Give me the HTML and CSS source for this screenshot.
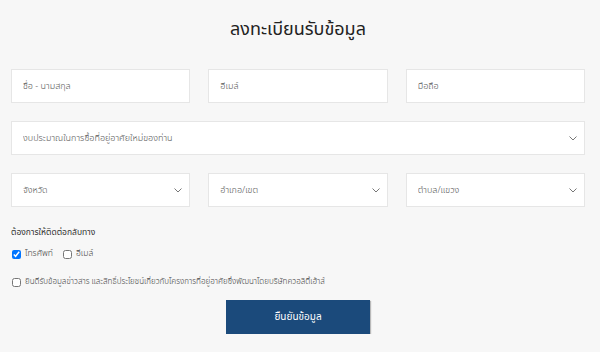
FILE: index.html
```html
<!DOCTYPE html>
<html lang="th">
<head>
    <meta charset="UTF-8">
    <title>ลงทะเบียนรับข้อมูล</title>
    <link rel="stylesheet" href="styles.css">
</head>
<body>
    <div id="container">
        <h1 class="title">ลงทะเบียนรับข้อมูล</h1>
        <form class="reg-form">
            <div class="row row-3">
                <input type="text" class="field" placeholder="ชื่อ - นามสกุล">
                <input type="text" class="field" placeholder="อีเมล์">
                <input type="text" class="field" placeholder="มือถือ">
            </div>
            <div class="row">
                <div class="select-wrap">
                    <select class="field">
                        <option>งบประมาณในการซื้อที่อยู่อาศัยใหม่ของท่าน</option>
                    </select>
                    <svg class="chevron" width="8" height="5" viewBox="0 0 8 5"><path d="M0.5 0.5 L4 4 L7.5 0.5" fill="none" stroke="#777" stroke-width="1"/></svg>
                </div>
            </div>
            <div class="row row-3">
                <div class="select-wrap">
                    <select class="field"><option>จังหวัด</option></select>
                    <svg class="chevron" width="8" height="5" viewBox="0 0 8 5"><path d="M0.5 0.5 L4 4 L7.5 0.5" fill="none" stroke="#777" stroke-width="1"/></svg>
                </div>
                <div class="select-wrap">
                    <select class="field"><option>อำเภอ/เขต</option></select>
                    <svg class="chevron" width="8" height="5" viewBox="0 0 8 5"><path d="M0.5 0.5 L4 4 L7.5 0.5" fill="none" stroke="#777" stroke-width="1"/></svg>
                </div>
                <div class="select-wrap">
                    <select class="field"><option>ตำบล/แขวง</option></select>
                    <svg class="chevron" width="8" height="5" viewBox="0 0 8 5"><path d="M0.5 0.5 L4 4 L7.5 0.5" fill="none" stroke="#777" stroke-width="1"/></svg>
                </div>
            </div>

            <div class="contact">
                <p class="contact-label">ต้องการให้ติดต่อกลับทาง</p>
                <div class="checks">
                    <label class="check"><input type="checkbox" checked> โทรศัพท์</label>
                    <label class="check"><input type="checkbox"> อีเมล์</label>
                </div>
                <label class="check consent"><input type="checkbox"> ยินดีรับข้อมูลข่าวสาร และสิทธิ์ประโยชน์เกี่ยวกับโครงการที่อยู่อาศัยซึ่งพัฒนาโดยบริษัทควอลิตี้เฮ้าส์</label>
            </div>

            <div class="submit-row">
                <button type="button" class="btn-submit">ยืนยันข้อมูล</button>
            </div>
        </form>
    </div>
</body>
</html>
```

FILE: styles.css
```css
body {
    font-family: 'Noto Sans Thai', 'Noto Sans', sans-serif;
    margin: 0;
    padding: 0;
    background-color: #f7f7f7;
    color: #333;
}

#container {
    width: 574px;
    margin-left: 11px;
}

.title {
    margin: 0;
    padding-top: 15px;
    height: 69px;
    box-sizing: border-box;
    text-align: center;
    font-size: 18px;
    font-weight: normal;
    color: #222;
    line-height: 30px;
}

.reg-form {
    display: flex;
    flex-direction: column;
}

.row {
    display: flex;
    margin-bottom: 18px;
}

.row-3 {
    display: grid;
    grid-template-columns: 1fr 1fr 1fr;
    column-gap: 18px;
}

.field {
    width: 100%;
    height: 34px;
    box-sizing: border-box;
    padding: 0 11px;
    border: 1px solid #e6e6e6;
    background-color: #fff;
    font-family: inherit;
    font-size: 9px;
    font-weight: 300;
    color: #555;
    outline: none;
    border-radius: 0;
}

.field::placeholder {
    color: #555;
}

.select-wrap {
    position: relative;
    width: 100%;
}

.select-wrap select {
    appearance: none;
    -webkit-appearance: none;
}

.chevron {
    position: absolute;
    right: 8px;
    top: 15px;
    pointer-events: none;
}

.contact {
    font-size: 8.5px;
    color: #333;
}

.contact-label {
    margin: 0 0 5px 0;
    line-height: 16px;
}

.checks {
    display: flex;
    gap: 9px;
    margin-bottom: 12px;
}

.check {
    display: flex;
    align-items: center;
    gap: 4px;
    line-height: 16px;
    font-weight: 300;
    color: #444;
}

.check input {
    width: 9px;
    height: 9px;
    margin: 0 0 0 1px;
}

.consent {
    margin-bottom: 10px;
    font-size: 8px;
}

.submit-row {
    display: flex;
    justify-content: center;
}

.btn-submit {
    width: 144px;
    height: 34px;
    border: none;
    background-color: #1b4a7b;
    box-shadow: 1px 1px 1px rgba(0, 0, 0, 0.25);
    color: #fff;
    font-family: inherit;
    font-size: 10px;
    cursor: pointer;
}
```
